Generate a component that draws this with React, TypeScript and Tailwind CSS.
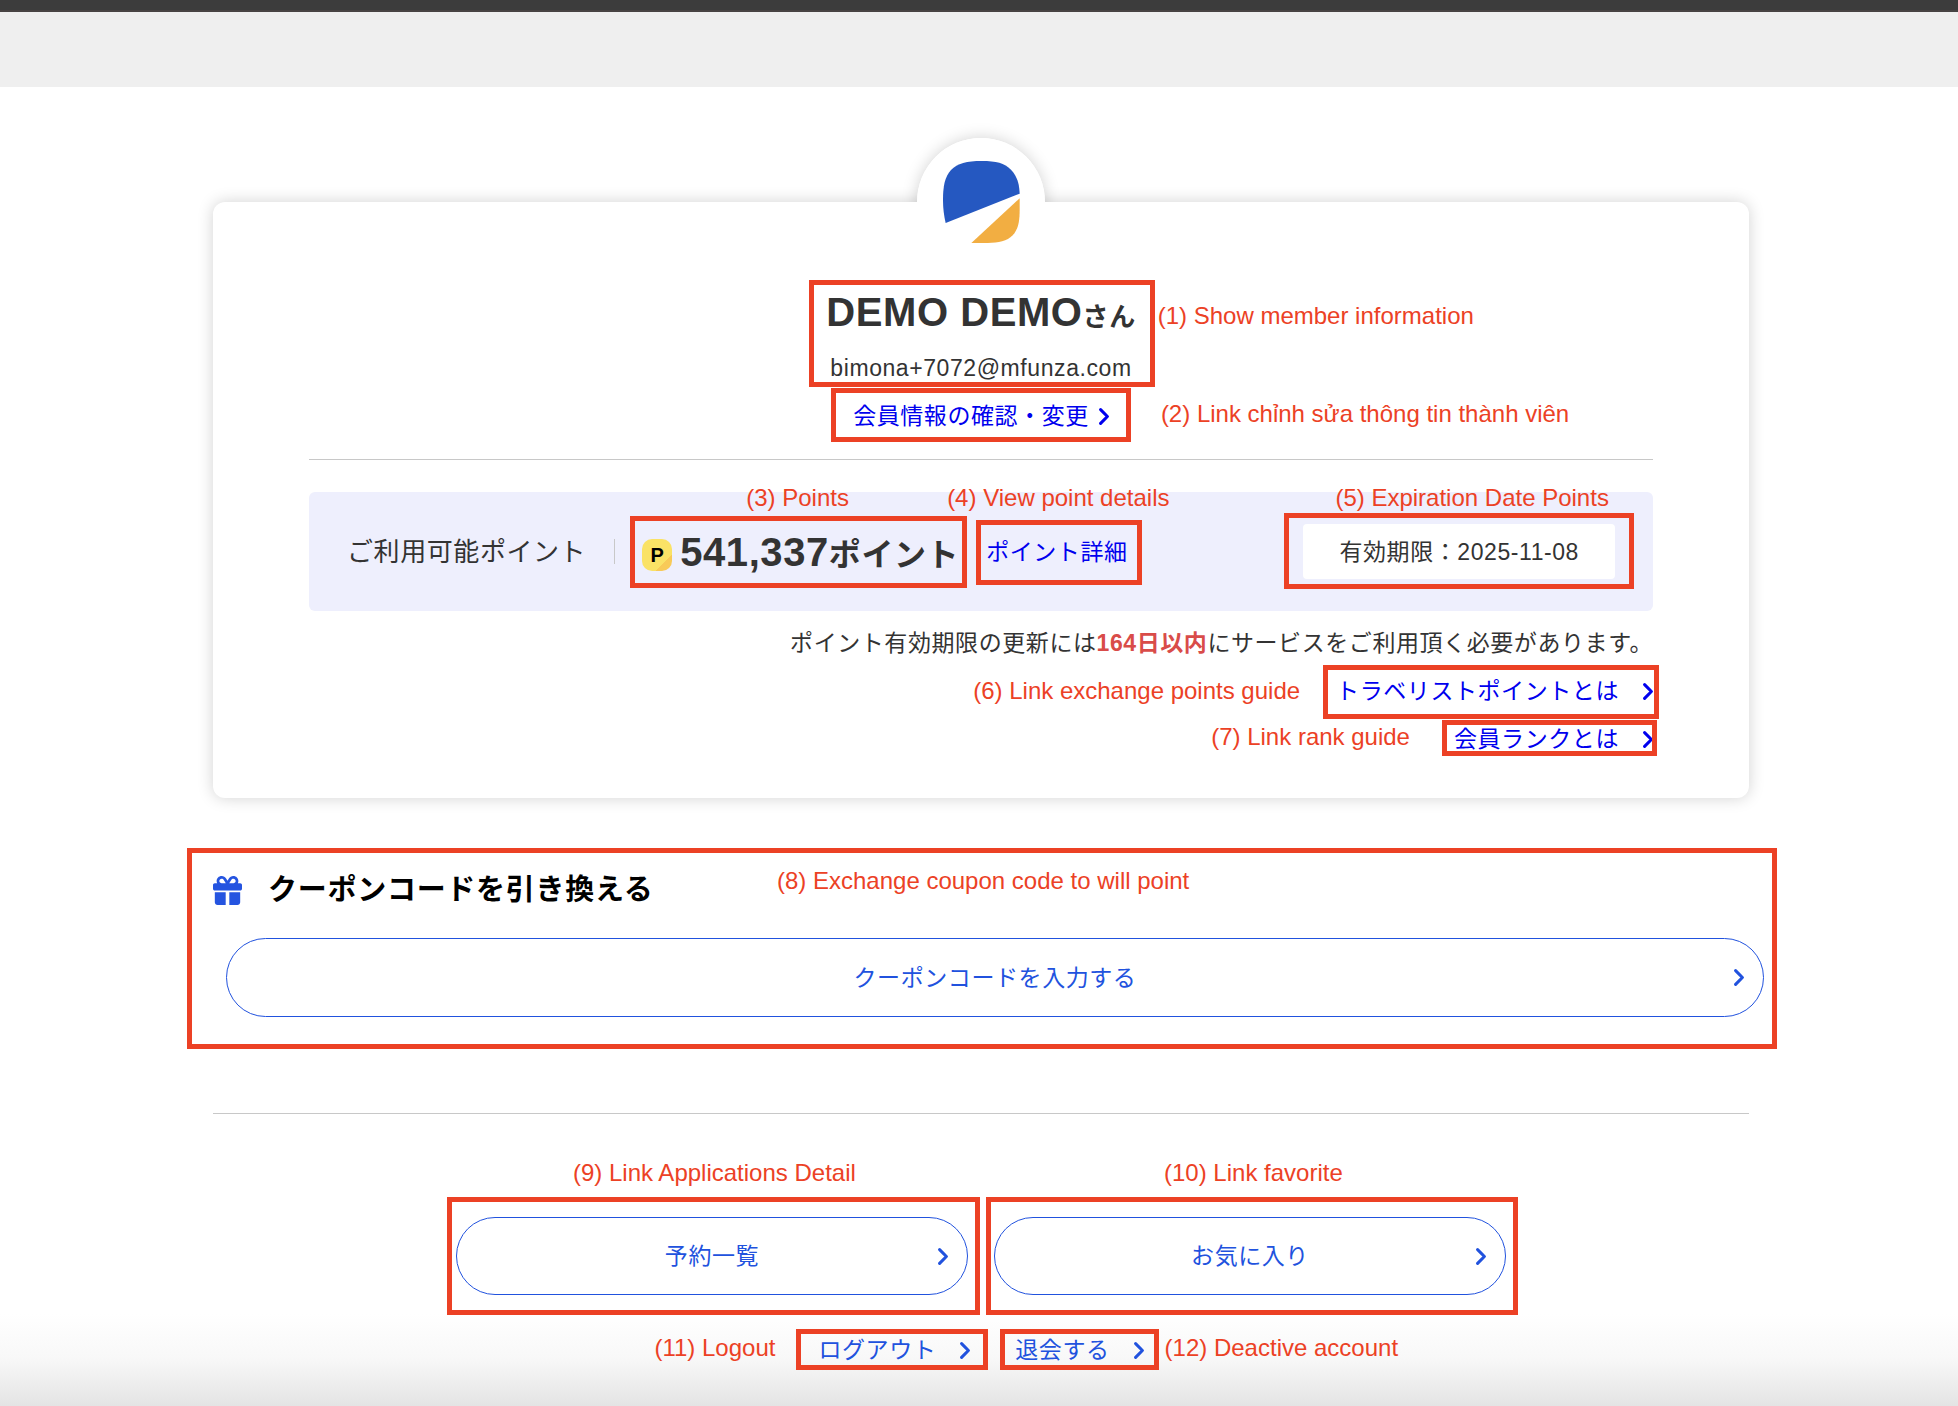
import type { ReactNode } from "react";
import { FaGift } from "react-icons/fa6";

function Chevron() {
  return (
    <svg viewBox="0 0 10 17" className="h-[17px] w-[10px] shrink-0" fill="none" aria-hidden="true">
      <path
        d="M1.6 1.6 8.4 8.5 1.6 15.4"
        stroke="currentColor"
        strokeWidth="3"
        strokeLinecap="round"
        strokeLinejoin="round"
      />
    </svg>
  );
}

function Logo() {
  return (
    <svg viewBox="0 0 231 246" className="h-[82px] w-[77px]" aria-hidden="true">
      <path
        fill="#2558c1"
        d="M8 186C3 165 0 143 0 117C0 78 5 47 24 27C43 7 72 0 116 0C160 0 184 6 204 26C222 45 229 68 230 98Z"
      />
      <path fill="#f2ae42" d="M230 112V147C230 182 225 206 209 223C192 241 167 246 134 246H85Z" />
    </svg>
  );
}

type NoteProps = {
  label: string;
  box: string;
  place: string;
  className?: string;
  children: ReactNode;
};

function Note({ label, box, place, className = "", children }: NoteProps) {
  return (
    <div className={`relative ${className}`}>
      {children}
      <span className={`pointer-events-none absolute border-5 border-[#ec4125] ${box}`} />
      <span
        className={`pointer-events-none absolute text-2xl leading-8 font-normal tracking-normal whitespace-nowrap text-[#ec4125] ${place}`}
      >
        {label}
      </span>
    </div>
  );
}

function PillLink({ children }: { children: ReactNode }) {
  return (
    <a
      href="#"
      className="relative flex h-[78px] w-full items-center justify-center rounded-full border border-[#2152de] text-[#2152de]"
    >
      {children}
      <span className="absolute right-[19px]">
        <Chevron />
      </span>
    </a>
  );
}

export default function App() {
  return (
    <div className="min-h-screen bg-white bg-[linear-gradient(to_top,#e4e4e4,#f8f8f8_48px,#ffffff_92px)] font-['Liberation_Sans','Noto_Sans_CJK_JP',sans-serif] text-[23px] leading-8 tracking-wide text-[#333333]">
      <div className="h-3 border-b-2 border-[#474343] bg-[#3c3c3c]" />
      <header className="h-[75px] bg-[#efefef]" />

      <main className="mx-auto w-full max-w-[1540px] pl-1">
        <section className="relative mt-[115px]">
          <div className="absolute -top-16 left-1/2 size-32 -translate-x-1/2 rounded-full shadow-[0_0_16px_rgba(0,0,0,0.18)]" />
          <div className="relative rounded-xl bg-white px-24 pt-[86px] pb-[43px] shadow-[0_0_16px_rgba(0,0,0,0.18)]">
            <div className="absolute -top-16 left-1/2 flex size-32 -translate-x-1/2 items-center justify-center rounded-full bg-white">
              <Logo />
            </div>

            <Note
              label="(1) Show member information"
              box="-top-2 -right-[19px] -bottom-[3px] -left-[17px]"
              place="top-3 left-full ml-[22px]"
              className="mx-auto w-fit text-center"
            >
              <h1 className="text-[40px] leading-[48px] font-bold">
                DEMO DEMO<span className="text-[26px] leading-none">さん</span>
              </h1>
              <p className="mt-4">bimona+7072@mfunza.com</p>
            </Note>

            <Note
              label="(2) Link chỉnh sửa thông tin thành viên"
              box="-top-3 -right-[22px] -bottom-[10px] -left-[22px]"
              place="-top-0.5 left-full ml-[52px]"
              className="mx-auto mt-4 w-fit"
            >
              <a href="#" className="flex items-center gap-[10px] text-[#0000ee]">
                会員情報の確認・変更
                <Chevron />
              </a>
            </Note>

            <hr className="mt-[27px] border-[#c8c8c8]" />

            <div className="mt-8 flex h-[119px] items-center rounded-md bg-[#eeeffd] pr-[38px] pl-[38px]">
              <span className="text-[26px]">ご利用可能ポイント</span>
              <span className="ml-7 h-[25px] border-l border-[#c8c8c8]" />
              <Note
                label="(3) Points"
                box="-top-3 -right-2 -bottom-3 -left-3"
                place="-top-[46px] left-[104px]"
                className="ml-[27px]"
              >
                <div className="flex items-center gap-2">
                  <span className="mt-1.5 flex h-8 w-[30px] items-center justify-center rounded-[10px] bg-[linear-gradient(135deg,#fae266_74%,#f8ca58_74%)] text-xl font-bold tracking-normal text-black">
                    P
                  </span>
                  <span className="text-[40px] leading-[48px] font-bold">
                    541,337<span className="text-[32px] leading-none">ポイント</span>
                  </span>
                </div>
              </Note>
              <Note
                label="(4) View point details"
                box="-top-4 -right-[14px] -bottom-[17px] -left-[10px]"
                place="-top-[54px] -left-[39px]"
                className="ml-[27px]"
              >
                <a href="#" className="block text-[#0000ee]">
                  ポイント詳細
                </a>
              </Note>
              <Note
                label="(5) Expiration Date Points"
                box="-top-[11px] -right-[19px] -bottom-[10px] -left-[19px]"
                place="-top-[42px] left-8"
                className="ml-auto"
              >
                <p className="flex h-[55px] items-center rounded bg-white px-9">有効期限：2025-11-08</p>
              </Note>
            </div>

            <p className="mt-4 text-right">
              ポイント有効期限の更新には<strong className="text-[#d94c49]">164日以内</strong>
              にサービスをご利用頂く必要があります。
            </p>

            <Note
              label="(6) Link exchange points guide"
              box="-top-[10px] -right-1.5 -bottom-3 -left-[13px]"
              place="top-0 right-full mr-9"
              className="mt-4 ml-auto w-fit"
            >
              <a href="#" className="flex items-center gap-6 text-[#0000ee]">
                トラベリストポイントとは
                <Chevron />
              </a>
            </Note>

            <Note
              label="(7) Link rank guide"
              box="-top-[3px] -right-1 -bottom-[1px] -left-3"
              place="-top-0.5 right-full mr-11"
              className="mt-4 ml-auto w-fit"
            >
              <a href="#" className="flex items-center gap-6 text-[#0000ee]">
                会員ランクとは
                <Chevron />
              </a>
            </Note>
          </div>
        </section>

        <Note
          label="(8) Exchange coupon code to will point"
          box="-top-[22px] -right-7 -bottom-8 -left-[26px]"
          place="-top-[5px] left-[564px]"
          className="mt-[72px]"
        >
          <h2 className="flex h-10 items-center gap-[26px] text-[29px] font-bold tracking-wide text-black">
            <FaGift className="size-[29px] text-[#2554e0]" />
            クーポンコードを引き換える
          </h2>
          <div className="mt-7 -mr-[15px] ml-[13px]">
            <button
              type="button"
              className="relative flex h-[79px] w-full items-center justify-center rounded-full border border-[#2152de] tracking-wide text-[#2152de]"
            >
              クーポンコードを入力する
              <span className="absolute right-[19px]">
                <Chevron />
              </span>
            </button>
          </div>
        </Note>

        <hr className="mt-24 border-[#c8c8c8]" />

        <nav className="mx-auto mt-[103px] grid max-w-[1050px] grid-cols-2 gap-[26px]">
          <Note
            label="(9) Link Applications Detail"
            box="-top-5 -right-3 -bottom-5 -left-[9px]"
            place="-top-[60px] left-[117px]"
          >
            <PillLink>予約一覧</PillLink>
          </Note>
          <Note
            label="(10) Link favorite"
            box="-top-5 -right-3 -bottom-5 -left-2"
            place="-top-[60px] left-[170px]"
          >
            <PillLink>お気に入り</PillLink>
          </Note>
        </nav>

        <div className="mt-[39px] flex justify-center gap-[45px] pb-10">
          <Note
            label="(11) Logout"
            box="-top-[5px] -right-[18px] -bottom-1 -left-[22px]"
            place="-top-0.5 right-full mr-[43px]"
          >
            <a href="#" className="flex items-center gap-6 text-[#2152de]">
              ログアウト
              <Chevron />
            </a>
          </Note>
          <Note
            label="(12) Deactive account"
            box="-top-[5px] -right-[15px] -bottom-1 -left-[15px]"
            place="-top-0.5 left-full ml-[21px]"
          >
            <a href="#" className="flex items-center gap-6 text-[#2152de]">
              退会する
              <Chevron />
            </a>
          </Note>
        </div>
      </main>
    </div>
  );
}
